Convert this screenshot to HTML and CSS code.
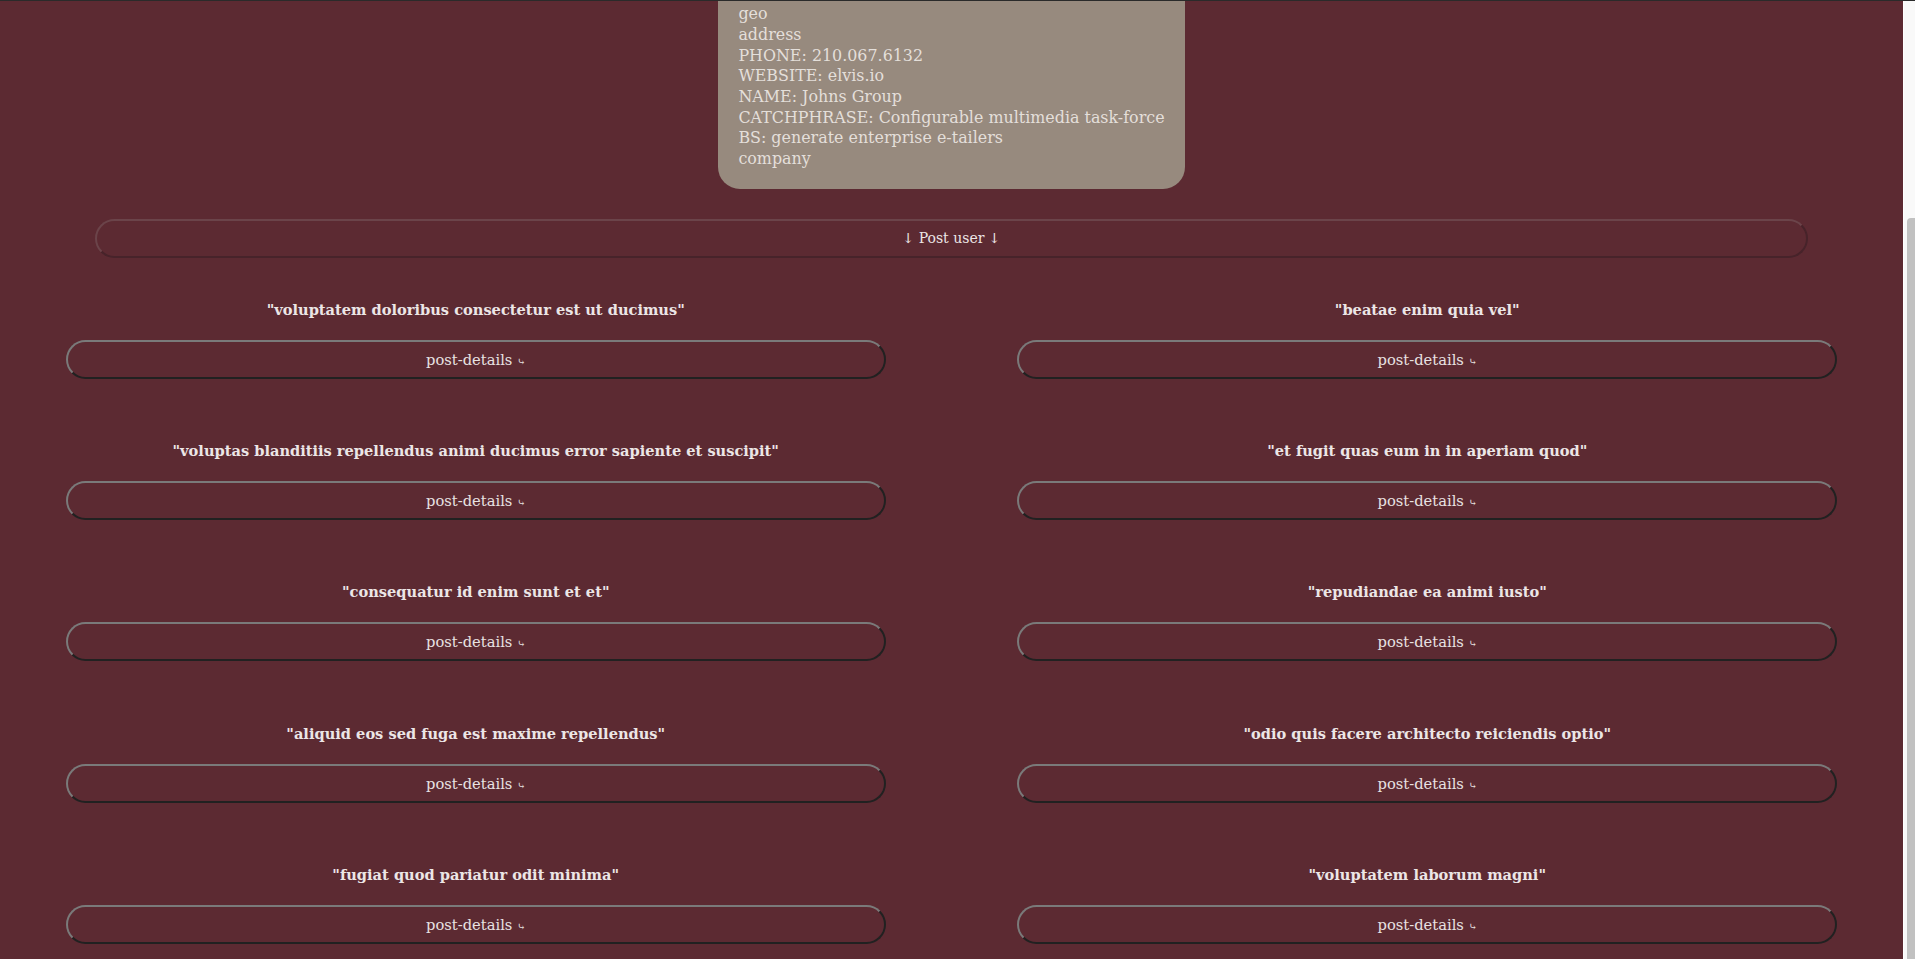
FILE: index.html
```html
<!DOCTYPE html>
<html lang="en">
<head>
<meta charset="utf-8">
<title>User details</title>
<link rel="stylesheet" href="styles.css">
</head>
<body>
<div class="app">
  <main class="viewport">
    <div class="page">
      <section class="user-card">
        <p>ID: 7</p>
        <p>NAME: Kurtis Weissnat</p>
        <p>USERNAME: Elwyn.Skiles</p>
        <p>EMAIL: Telly.Hoeger@billy.biz</p>
        <p>STREET: Rex Trail</p>
        <p>SUITE: Suite 280</p>
        <p>CITY: Howemouth</p>
        <p>ZIPCODE: 58804-1099</p>
        <p>LAT: 24.8918</p>
        <p>LNG: 21.8984</p>
        <p>geo</p>
        <p>address</p>
        <p>PHONE: 210.067.6132</p>
        <p>WEBSITE: elvis.io</p>
        <p>NAME: Johns Group</p>
        <p>CATCHPHRASE: Configurable multimedia task-force</p>
        <p>BS: generate enterprise e-tailers</p>
        <p>company</p>
      </section>
      <div class="section-bar">↓ Post user ↓</div>
      <div class="posts">
        <div class="post"><h4 class="post-title">"voluptatem doloribus consectetur est ut ducimus"</h4><button class="post-btn">post-details <span class="hook">⤷</span></button></div>
        <div class="post"><h4 class="post-title">"beatae enim quia vel"</h4><button class="post-btn">post-details <span class="hook">⤷</span></button></div>
        <div class="post"><h4 class="post-title">"voluptas blanditiis repellendus animi ducimus error sapiente et suscipit"</h4><button class="post-btn">post-details <span class="hook">⤷</span></button></div>
        <div class="post"><h4 class="post-title">"et fugit quas eum in in aperiam quod"</h4><button class="post-btn">post-details <span class="hook">⤷</span></button></div>
        <div class="post"><h4 class="post-title">"consequatur id enim sunt et et"</h4><button class="post-btn">post-details <span class="hook">⤷</span></button></div>
        <div class="post"><h4 class="post-title">"repudiandae ea animi iusto"</h4><button class="post-btn">post-details <span class="hook">⤷</span></button></div>
        <div class="post"><h4 class="post-title">"aliquid eos sed fuga est maxime repellendus"</h4><button class="post-btn">post-details <span class="hook">⤷</span></button></div>
        <div class="post"><h4 class="post-title">"odio quis facere architecto reiciendis optio"</h4><button class="post-btn">post-details <span class="hook">⤷</span></button></div>
        <div class="post"><h4 class="post-title">"fugiat quod pariatur odit minima"</h4><button class="post-btn">post-details <span class="hook">⤷</span></button></div>
        <div class="post"><h4 class="post-title">"voluptatem laborum magni"</h4><button class="post-btn">post-details <span class="hook">⤷</span></button></div>
      </div>
    </div>
  </main>
  <div class="scrollbar"><div class="thumb"></div></div>
</div>
</body>
</html>
```

FILE: styles.css
```css
html, body {
  margin: 0;
  height: 100%;
}

body {
  background: #5c2a32;
  font-family: "DejaVu Serif", Georgia, serif;
  color: #e8e2e2;
}

.app {
  display: flex;
  height: 100vh;
  box-sizing: border-box;
  border-top: 1px solid #2a2a2a;
}

.viewport {
  flex: 1;
  min-width: 0;
  display: flex;
  flex-direction: column;
  justify-content: flex-end;
  overflow: hidden;
}

.page {
  padding-bottom: 15px;
}

.user-card {
  width: fit-content;
  margin: 0 auto;
  padding: 20px 20px 19px;
  background: #978a7e;
  border-radius: 22px;
  color: #e4dfda;
  font-size: 15.9px;
  line-height: 20.7px;
}

.user-card p {
  margin: 0;
}

.section-bar {
  width: 90%;
  margin: 30px auto 0;
  box-sizing: border-box;
  height: 39px;
  line-height: 35px;
  border: 2px solid;
  border-color: #6b444a #47232a #47232a #6b444a;
  border-radius: 20px;
  text-align: center;
  font-size: 14px;
  color: #ece6e6;
}

.posts {
  display: grid;
  grid-template-columns: 1fr 1fr;
  row-gap: 62.3px;
  margin-top: 42px;
}

.post {
  display: flex;
  flex-direction: column;
  align-items: center;
}

.post-title {
  margin: 0 0 20px;
  font-size: 14.6px;
  line-height: 20px;
  font-weight: bold;
  text-align: center;
  color: #ece6e6;
}

.post-btn {
  width: 86.2%;
  height: 39px;
  box-sizing: border-box;
  border: 2px solid;
  border-color: #7a7a7a #212121 #212121 #7a7a7a;
  border-radius: 20px;
  background: transparent;
  color: #e8e2e2;
  font-family: inherit;
  font-size: 14.7px;
  padding: 0;
}

.hook {
  font-size: 10px;
}

.scrollbar {
  width: 12px;
  flex: none;
  background: #f9f9f9;
  border-left: 1px solid #ffffff;
  box-sizing: border-box;
  display: flex;
  flex-direction: column;
  justify-content: flex-end;
  padding-left: 3px;
}

.thumb {
  height: 741px;
  background: #c1c1c1;
  border-radius: 4px 0 0 0;
}
```
